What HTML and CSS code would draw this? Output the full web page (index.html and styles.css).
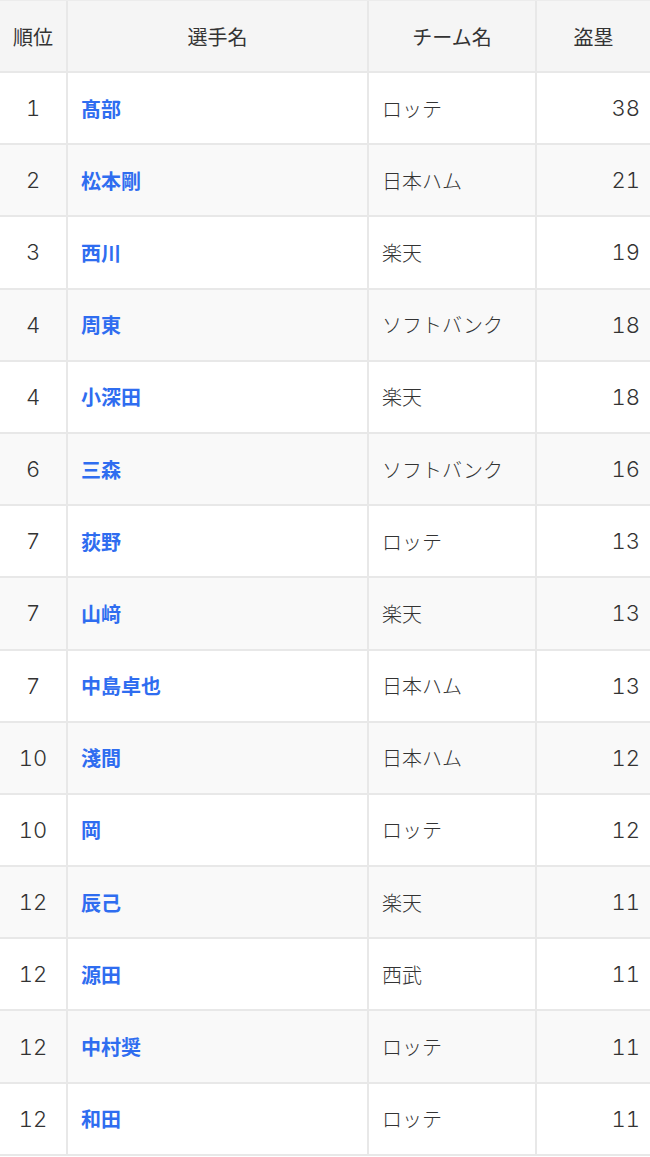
FILE: index.html
```html
<!DOCTYPE html>
<html lang="ja">
<head>
<meta charset="utf-8">
<title>盗塁ランキング</title>
<link rel="stylesheet" href="styles.css">
</head>
<body>
<div class="table">
  <div class="row head">
    <div class="cell c-rank">順位</div>
    <div class="cell c-name">選手名</div>
    <div class="cell c-team">チーム名</div>
    <div class="cell c-sb">盗塁</div>
  </div>
  <div class="row"><div class="cell c-rank">1</div><div class="cell c-name"><a href="#">髙部</a></div><div class="cell c-team">ロッテ</div><div class="cell c-sb">38</div></div>
  <div class="row alt"><div class="cell c-rank">2</div><div class="cell c-name"><a href="#">松本剛</a></div><div class="cell c-team">日本ハム</div><div class="cell c-sb">21</div></div>
  <div class="row"><div class="cell c-rank">3</div><div class="cell c-name"><a href="#">西川</a></div><div class="cell c-team">楽天</div><div class="cell c-sb">19</div></div>
  <div class="row alt"><div class="cell c-rank">4</div><div class="cell c-name"><a href="#">周東</a></div><div class="cell c-team">ソフトバンク</div><div class="cell c-sb">18</div></div>
  <div class="row"><div class="cell c-rank">4</div><div class="cell c-name"><a href="#">小深田</a></div><div class="cell c-team">楽天</div><div class="cell c-sb">18</div></div>
  <div class="row alt"><div class="cell c-rank">6</div><div class="cell c-name"><a href="#">三森</a></div><div class="cell c-team">ソフトバンク</div><div class="cell c-sb">16</div></div>
  <div class="row"><div class="cell c-rank">7</div><div class="cell c-name"><a href="#">荻野</a></div><div class="cell c-team">ロッテ</div><div class="cell c-sb">13</div></div>
  <div class="row alt"><div class="cell c-rank">7</div><div class="cell c-name"><a href="#">山﨑</a></div><div class="cell c-team">楽天</div><div class="cell c-sb">13</div></div>
  <div class="row"><div class="cell c-rank">7</div><div class="cell c-name"><a href="#">中島卓也</a></div><div class="cell c-team">日本ハム</div><div class="cell c-sb">13</div></div>
  <div class="row alt"><div class="cell c-rank">10</div><div class="cell c-name"><a href="#">淺間</a></div><div class="cell c-team">日本ハム</div><div class="cell c-sb">12</div></div>
  <div class="row"><div class="cell c-rank">10</div><div class="cell c-name"><a href="#">岡</a></div><div class="cell c-team">ロッテ</div><div class="cell c-sb">12</div></div>
  <div class="row alt"><div class="cell c-rank">12</div><div class="cell c-name"><a href="#">辰己</a></div><div class="cell c-team">楽天</div><div class="cell c-sb">11</div></div>
  <div class="row"><div class="cell c-rank">12</div><div class="cell c-name"><a href="#">源田</a></div><div class="cell c-team">西武</div><div class="cell c-sb">11</div></div>
  <div class="row alt"><div class="cell c-rank">12</div><div class="cell c-name"><a href="#">中村奨</a></div><div class="cell c-team">ロッテ</div><div class="cell c-sb">11</div></div>
  <div class="row"><div class="cell c-rank">12</div><div class="cell c-name"><a href="#">和田</a></div><div class="cell c-team">ロッテ</div><div class="cell c-sb">11</div></div>
</div>
</body>
</html>
```

FILE: styles.css
```css
html, body {
  margin: 0;
  padding: 0;
  background: #ffffff;
}
body {
  font-family: "Noto Sans CJK JP", "Noto Sans", sans-serif;
  font-size: 20px;
  color: #333333;
  width: 650px;
  overflow: hidden;
}
.table {
  display: flex;
  flex-direction: column;
  border-top: 1px solid #ececec;
}
.row {
  display: grid;
  grid-template-columns: 68px 301px 168px 1fr;
  height: 72.2px;
  box-sizing: border-box;
  border-bottom: 2px solid #e8e8e8;
  background: #ffffff;
}
.row.head {
  height: 72px;
  background: #f5f5f5;
}
.row.alt {
  background: #f9f9f9;
}
.cell {
  display: flex;
  align-items: center;
  box-sizing: border-box;
  border-right: 2px solid #e8e8e8;
  padding: 0 13px;
  font-weight: 300;
  white-space: nowrap;
}
.cell:last-child {
  border-right: none;
  padding-right: 10px;
}
.c-rank {
  justify-content: center;
  padding: 0;
}
.c-rank,
.c-sb {
  font-family: "Inter", "Noto Sans", sans-serif;
  font-size: 22px;
  font-weight: 300;
  font-variant-numeric: tabular-nums;
  color: #333333;
}
.c-name a {
  color: #2f6df0;
  font-weight: 700;
  text-decoration: none;
}
.c-sb {
  justify-content: flex-end;
}
.head .cell {
  justify-content: center;
  font-family: "Noto Sans CJK JP", "Noto Sans", sans-serif;
  font-size: 20px;
  font-weight: 400;
  color: #333333;
}
.head .c-sb {
  padding-right: 0;
  padding-left: 0;
}
```
